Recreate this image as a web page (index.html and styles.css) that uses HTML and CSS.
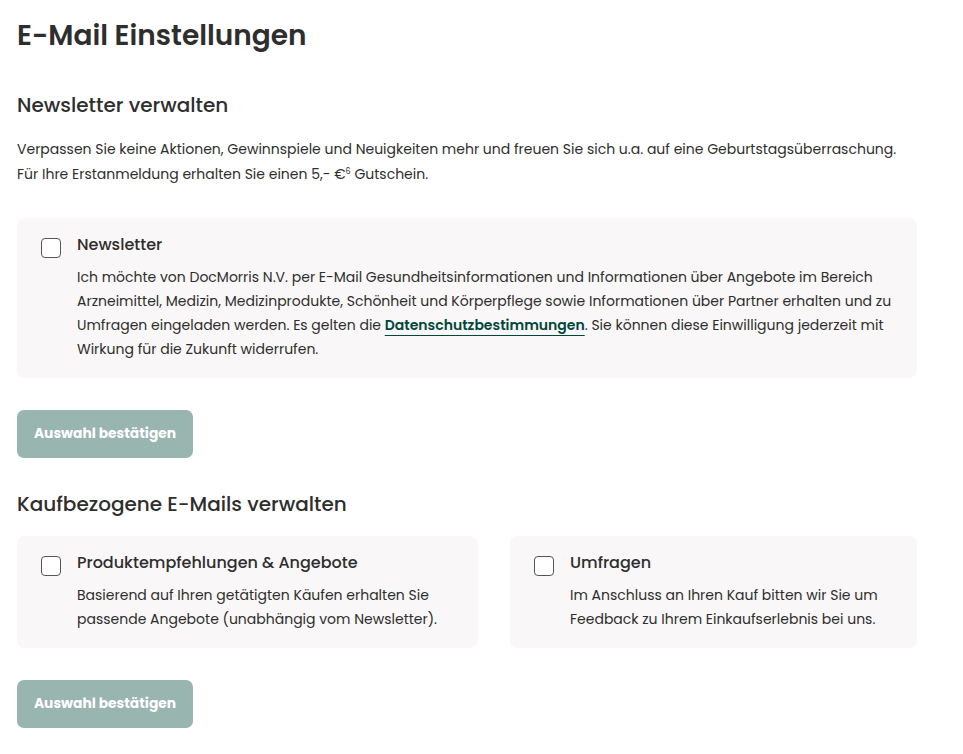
FILE: index.html
```html
<!DOCTYPE html>
<html lang="de">
<head>
  <meta charset="UTF-8" />
  <title>E-Mail Einstellungen</title>
  <link rel="stylesheet" href="styles.css">
</head>
<body>
  <div class="page">
    <h1>E-Mail Einstellungen</h1>

    <!-- Newsletter -->
    <h2>Newsletter verwalten</h2>
    <p class="intro">
      Verpassen Sie keine Aktionen, Gewinnspiele und Neuigkeiten mehr und freuen Sie sich u.a. auf eine Geburtstagsüberraschung.<br>
      Für Ihre Erstanmeldung erhalten Sie einen 5,- €<sup>6</sup> Gutschein.
    </p>

    <label class="option first">
      <span class="box"></span>
      <span class="option-text">
        <span class="option-title">Newsletter</span>
        <span class="option-desc">Ich möchte von DocMorris N.V. per E-Mail Gesundheitsinformationen und Informationen über Angebote im Bereich Arzneimittel, Medizin, Medizinprodukte, Schönheit und Körperpflege sowie Informationen über Partner erhalten und zu Umfragen eingeladen werden. Es gelten die <a href="#">Datenschutzbestimmungen</a>. Sie können diese Einwilligung jederzeit mit Wirkung für die Zukunft widerrufen.</span>
      </span>
    </label>

    <button class="confirm">Auswahl bestätigen</button>

    <!-- Kaufbezogene Mails -->
    <h2 class="second">Kaufbezogene E-Mails verwalten</h2>
    <div class="options-row">
      <label class="option">
        <span class="box"></span>
        <span class="option-text">
          <span class="option-title">Produktempfehlungen &amp; Angebote</span>
          <span class="option-desc">Basierend auf Ihren getätigten Käufen erhalten Sie passende Angebote (unabhängig vom Newsletter).</span>
        </span>
      </label>
      <label class="option">
        <span class="box"></span>
        <span class="option-text">
          <span class="option-title">Umfragen</span>
          <span class="option-desc">Im Anschluss an Ihren Kauf bitten wir Sie um Feedback zu Ihrem Einkaufserlebnis bei uns.</span>
        </span>
      </label>
    </div>

    <button class="confirm">Auswahl bestätigen</button>
  </div>
</body>
</html>
```

FILE: styles.css
```css
* { margin: 0; padding: 0; box-sizing: border-box; }
html, body {
  background: #fff;
  color: #2e2e2e;
  font-family: "Poppins", "DejaVu Sans", sans-serif;
}

.page {
  width: 900px;
  margin-left: 17px;
  padding-top: 16px;
  display: flex;
  flex-direction: column;
  align-items: flex-start;
}

h1 {
  font-size: 28px;
  font-weight: 600;
  line-height: 40px;
}

h2 {
  font-size: 20px;
  font-weight: 500;
  line-height: 30px;
  margin-top: 34px;
}
h2.second { margin-top: 31px; }

.intro {
  font-size: 14px;
  line-height: 25px;
  margin-top: 17px;
}
.intro sup {
  font-size: 8px;
  line-height: 0;
  vertical-align: 5px;
}

/* Auswahl-Karten */
.option {
  display: flex;
  gap: 16px;
  width: 100%;
  background: #f9f7f7;
  border-radius: 8px;
  padding: 15px 24px 17px;
  margin-top: 32px;
  cursor: pointer;
}
.option.first { margin-top: 31px; }
.box {
  flex: none;
  width: 20px;
  height: 20px;
  margin-top: 5px;
  border: 1.5px solid #555;
  border-radius: 4px;
  background: #fff;
}
.option-text {
  display: flex;
  flex-direction: column;
  gap: 8px;
}
.option-title {
  font-size: 16px;
  font-weight: 500;
  line-height: 24px;
}
.option-desc {
  font-size: 14px;
  line-height: 24px;
}
.option-desc a {
  color: #00473a;
  font-weight: 600;
  text-decoration: underline;
  text-decoration-thickness: 1px;
  text-underline-offset: 5px;
}

.options-row {
  display: grid;
  grid-template-columns: 461px 407px;
  gap: 32px;
  width: 100%;
  margin-top: 17px;
}
.options-row .option { margin-top: 0; }

/* Buttons */
.confirm {
  margin-top: 32px;
  width: 176px;
  height: 48px;
  border: none;
  border-radius: 7px;
  background: #99b5b0;
  color: #fff;
  font-family: inherit;
  font-size: 13.8px;
  font-weight: 700;
}
```
